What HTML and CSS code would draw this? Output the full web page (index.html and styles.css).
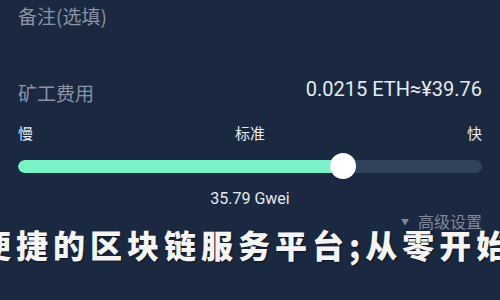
FILE: index.html
```html
<!DOCTYPE html>
<html lang="zh-CN">
<head>
<meta charset="utf-8">
<link rel="stylesheet" href="styles.css">
</head>
<body>
<div class="page">
  <div class="remark">备注(选填)</div>
  <div class="fee-row">
    <div class="fee-label">矿工费用</div>
    <div class="fee-value">0.0215 ETH≈¥39.76</div>
  </div>
  <div class="speed-row">
    <span>慢</span>
    <span>标准</span>
    <span>快</span>
  </div>
  <div class="slider">
    <div class="track">
      <div class="fill" style="width:70%"></div>
    </div>
    <div class="thumb" style="left:70%"></div>
  </div>
  <div class="gwei">35.79 Gwei</div>
  <div class="advanced"><span class="caret">▼</span>高级设置</div>
  <div class="overlay">便捷的区块链服务平台;从零开始的</div>
</div>
</body>
</html>
```
FILE: styles.css
```css
html, body {
  margin: 0;
  padding: 0;
  background: #1b2940;
}
body {
  width: 500px;
  height: 300px;
  overflow: hidden;
  font-family: Roboto, "Noto Sans CJK SC", sans-serif;
}
.page {
  position: relative;
  width: 500px;
  height: 300px;
  padding: 0 18px;
  box-sizing: border-box;
  display: flex;
  flex-direction: column;
}
.remark {
  font-family: "Noto Sans CJK SC", sans-serif;
  font-size: 19px;
  line-height: 26px;
  padding-top: 3px;
  color: #8a93a4;
}
.fee-row {
  margin-top: 46px;
  display: flex;
  justify-content: space-between;
  align-items: flex-start;
}
.fee-label {
  font-family: "Noto Sans CJK SC", sans-serif;
  font-size: 19px;
  line-height: 26px;
  padding-top: 5px;
  color: #8a93a4;
}
.fee-value {
  font-size: 20px;
  line-height: 26px;
  padding-top: 1px;
  color: #e6eaf0;
}
.speed-row {
  margin-top: 17px;
  display: flex;
  justify-content: space-between;
  font-family: "Noto Sans CJK SC", sans-serif;
  font-size: 15px;
  line-height: 20px;
  color: #e8ebf0;
}
.slider {
  position: relative;
  margin-top: 10px;
  height: 26px;
  display: flex;
  align-items: center;
}
.track {
  width: 100%;
  height: 13px;
  border-radius: 7px;
  background: #33425b;
  overflow: hidden;
}
.fill {
  height: 100%;
  background: #79f2c6;
  border-radius: 7px 0 0 7px;
}
.thumb {
  position: absolute;
  top: 0;
  width: 26px;
  height: 26px;
  margin-left: -13px;
  border-radius: 50%;
  background: #ffffff;
}
.gwei {
  margin-top: 10px;
  text-align: center;
  font-size: 16px;
  line-height: 20px;
  color: #e6eaf0;
}
.advanced {
  margin-top: 1px;
  align-self: flex-end;
  font-family: "Noto Sans CJK SC", sans-serif;
  font-size: 16px;
  line-height: 20px;
  color: #7f889a;
  display: flex;
  align-items: center;
}
.caret {
  font-size: 8px;
  margin-right: 9px;
  margin-top: 2px;
}
.overlay {
  position: absolute;
  left: -21px;
  top: 228px;
  white-space: nowrap;
  font-family: "Noto Sans CJK SC", sans-serif;
  font-weight: 900;
  font-size: 32px;
  line-height: 32px;
  letter-spacing: 5px;
  color: #f4f4f4;
  text-shadow: 1px 1px 2px rgba(0, 0, 0, 0.5);
}
```
